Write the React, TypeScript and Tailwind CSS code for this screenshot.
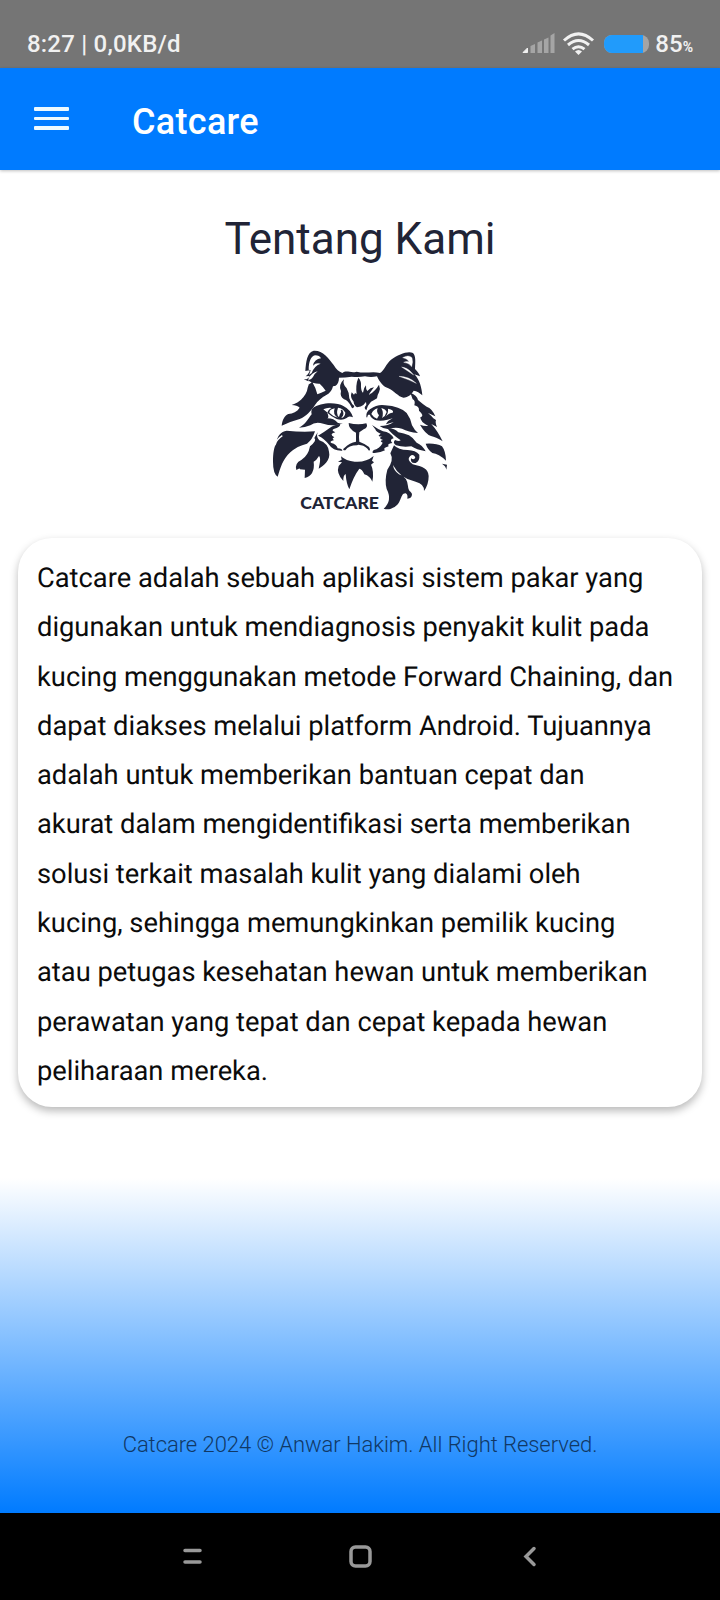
const lines = [
  'Catcare adalah sebuah aplikasi sistem pakar yang',
  'digunakan untuk mendiagnosis penyakit kulit pada',
  'kucing menggunakan metode Forward Chaining, dan',
  'dapat diakses melalui platform Android. Tujuannya',
  'adalah untuk memberikan bantuan cepat dan',
  'akurat dalam mengidentifikasi serta memberikan',
  'solusi terkait masalah kulit yang dialami oleh',
  'kucing, sehingga memungkinkan pemilik kucing',
  'atau petugas kesehatan hewan untuk memberikan',
  'perawatan yang tepat dan cepat kepada hewan',
  'peliharaan mereka.',
];

function StatusBar() {
  return (
    <div className="flex h-[68px] shrink-0 items-end justify-between bg-[#757575] pr-[27px] pb-[10px] pl-[27px] text-[#f1f1f1]">
      <span className="text-[24px] leading-[28px] font-medium tracking-[0.2px] whitespace-nowrap">8:27 | 0,0KB/d</span>
      <div className="flex h-[28px] items-center">
        <svg width="133" height="28" viewBox="0 0 133 28">
          <path d="M1 22.500 5.500 18v4.500z" fill="#f1f1f1" stroke="#f1f1f1" />
          <path d="M10 23v-7l4.500-2v9zM17 23V12.500l4.500-2V23zM23.500 23V9.500l4.500-2V23zM30 23V5.500L34 3v20z" fill="#a5a5a5" transform="translate(-1.500 0)" />
          <g fill="none" stroke="#f1f1f1" strokeWidth="3">
            <path d="M42 10.500Q56.500-2.800 71 10.500" />
            <path d="M46 15Q56.500 6 67 15" />
            <path d="M50.500 19.200Q56.500 14.300 62.500 19.200" />
          </g>
          <path d="M53 21.500q3.500-3 7 0L56.500 25z" fill="#f1f1f1" />
          <rect x="82" y="5" width="45" height="18" rx="8" fill="#a4a4a4" />
          <path d="M90 5h31v18H90a8 8 0 0 1-8-8v-2a8 8 0 0 1 8-8z" fill="#219bfb" />
        </svg>
        <span className="text-[24px] leading-[28px] font-medium">85</span>
        <span className="pt-[6px] text-[14px] leading-[20px] font-bold">%</span>
      </div>
    </div>
  );
}

function CatLogo() {
  return (
    <svg width="190" height="170" viewBox="0 0 570 510" className="shrink-0" fill="#212436">
      {/* ears and brow */}
      <path d="M121 78C123 50 126 22 146 17C172 15 192 40 206 60C214 74 222 80 232 84C245 74 258 86 275 80C300 86 325 78 345 84C358 76 362 58 378 44C400 28 430 16 444 24C453 32 451 52 450 72C458 80 464 88 465 94L448 88C464 104 470 128 472 151C464 144 456 138 446 137C440 148 430 157 415 158C400 156 386 136 370 130C356 126 344 112 336 94Q318 98 300 94Q280 98 260 95Q240 98 222 98C222 110 218 118 212 122L204 124Q200 142 184 150C170 158 158 168 150 180C138 198 124 214 104 222Q75 230 50 242C52 226 58 212 70 207C84 206 96 200 104 188Q96 180 80 180Q100 172 108 164Q126 146 128 128L134 110L116 103Q130 104 134 93L122 94Q134 84 134 76Z" />
      <path d="M131 74C131 50 138 33 150 31C160 31 165 35 168 40Q148 42 144 62Q153 52 167 56Q148 62 140 84L132 90L137 76ZM131 99Q140 84 158 79Q146 88 144 96Q140 103 130 106ZM143 113Q157 117 164 116Q173 124 182 137Q168 143 157 148Q153 129 143 113ZM129 106Q134 110 140 112L133 118Z" fill="#fff" />
      <path d="M413 38Q430 28 441 38Q445 50 440 65Q430 53 416 52Q422 48 432 50Q426 40 413 38ZM410 66Q426 67 439 82L446 90Q428 78 410 66ZM402 94Q432 94 454 115Q432 104 402 94Z" fill="#fff" stroke="#fff" />
      {/* forehead stripes */}
      <path d="M280 98Q290 108 288 126Q289 140 294 143Q296 128 303 121Q302 132 307 138Q316 128 327 127Q313 142 307 162Q300 184 276 187Q266 180 266 170Q254 158 260 142L267 149Q271 141 275 148Q271 120 280 98ZM237 103Q232 118 245 130Q254 146 253 160Q261 180 268 183Q263 196 258 184Q249 166 237 163Q224 155 228 138Q219 120 237 103ZM342 119Q347 130 342 142Q336 152 336 160Q328 166 318 170Q308 180 304 196Q294 189 304 180Q300 160 315 147Q330 139 342 119Z" />
      {/* eye patches */}
      <path d="M102 248C122 238 128 223 140 208Q137 196 143 190C165 172 215 171 235 183Q257 194 264 217Q251 211 245 219Q232 228 215 222Q196 212 187 203Q193 218 187 220Q207 220 218 233Q230 237 236 235Q205 246 175 236Q150 229 136 241Q120 248 102 248ZM304 215Q302 201 316 192Q338 177 360 181Q405 184 425 204Q437 220 441 241Q449 257 459 264Q430 261 411 251Q395 246 383 249Q362 257 344 243Q370 243 386 231L363 238Q366 228 383 220L367 224Q347 230 330 225Q316 217 315 210Q309 205 306 218Z" />
      <path d="M193 203Q193 193 209 190Q202 210 219 218Q203 214 193 203ZM219 188Q234 189 241 203Q240 216 229 219Q239 204 230 199Q225 205 222 216Q212 208 219 188ZM175 193Q187 187 200 189Q188 195 188 203ZM319 207Q325 193 338 190Q333 200 342 211L336 221Q325 217 319 207ZM349 189Q362 192 365 201Q362 213 351 219Q357 204 349 189ZM369 191Q389 195 383 203Q373 203 361 215Q371 204 369 191Z" fill="#fff" />
      <path d="M229 195q8 13-1 20M345 194v16" fill="none" stroke="#212436" strokeWidth="5" />
      {/* nose, mouth, whiskers */}
      <path d="M251 234Q278 241 304 235Q311 247 296 253L283 262Q281 274 283 290Q300 296 312 306Q318 316 312 317Q302 303 288 301Q280 297 276 301Q251 301 241 316Q229 315 239 308Q254 293 273 290V263Q250 252 251 234Z" />
      <path d="M225 237Q228 243 215 249Q192 254 211 262Q190 267 208 277Q198 282 208 285Q191 289 199 294Q215 298 218 310Q232 311 232 317Q204 318 193 300Q178 280 159 272Q180 260 193 250Q205 240 225 237ZM321 240Q339 253 354 259Q377 262 386 280Q372 284 382 294Q365 296 371 304Q352 309 360 316Q340 326 323 324Q321 315 334 313Q350 302 353 293Q341 287 354 285Q338 280 351 274Q333 276 347 266Q334 262 331 253Z" />
      {/* left mane */}
      <path d="M24 350C24 324 27 305 34 296C35 274 48 259 65 257Q111 262 150 259Q142 285 126 296Q96 303 76 322C52 344 46 370 38 395Q24 386 24 350Z" />
      <path d="M29 300Q34 284 52 272" fill="none" stroke="#fff" strokeWidth="4" />
      <path d="M158 262Q153 276 163 286Q189 295 192 320C198 344 176 363 161 371C166 349 167 339 162 333Q154 347 146 350Q151 390 119 399L120 374L105 373Q105 367 94 375Q88 355 109 345Q130 332 135 304Q157 286 148 279Z" />
      {/* chin */}
      <path d="M228 334Q243 348 269 350Q302 353 326 333L321 347L327 352L318 359Q328 379 322 410Q315 393 298 388Q291 372 283 371Q266 393 253 433Q244 416 242 387Q234 392 235 408Q213 385 221 363L231 352L219 350L230 344Z" />
      {/* right mane */}
      <path d="M436 143Q457 151 459 165Q475 179 485 185Q502 191 511 214L489 204Q500 213 505 220L513 225Q510 233 516 246L499 237Q518 258 533 289Q512 276 498 273Q481 267 465 239Q476 244 490 243Q465 230 466 217Q480 213 462 197Q463 184 448 181Q452 166 443 163Z" />
      <path d="M367 250Q388 249 400 262Q417 265 432 271Q444 278 455 293Q472 300 482 319Q454 314 439 304Q415 308 393 301Q382 294 390 285Q402 290 407 286Q379 267 367 250ZM482 296Q514 294 531 304Q542 318 543 347Q521 326 502 324Q488 314 482 296ZM531 356L546 359L544 374Q543 364 531 356Z" />
      <path d="M387 301Q400 315 428 315Q452 316 463 329Q465 348 452 354Q435 356 438 340Q448 347 451 337Q444 325 435 334Q424 344 443 358C474 366 489 370 491 393Q491 419 477 438Q479 417 452 410Q405 401 384 360Q386 377 402 388Q427 396 429 424C430 440 439 440 441 447Q441 461 427 461Q429 448 422 445C403 444 414 480 378 491Q367 495 356 491Q383 467 365 432Q358 407 367 374Q388 345 376 325Z" />
      <text x="106" y="492" textLength="236" lengthAdjust="spacingAndGlyphs" fontFamily="Lato, sans-serif" fontWeight="900" fontSize="51">CATCARE</text>
    </svg>
  );
}

export default function App() {
  return (
    <div className="flex h-[1600px] w-[720px] flex-col overflow-hidden bg-white font-[Roboto,sans-serif]">
      <StatusBar />
      <header className="z-10 flex h-[102px] shrink-0 items-center bg-[#007bff] pl-[34px] text-white shadow-[0_1px_3px_rgba(0,0,0,0.25)]">
        <div className="mt-[-1px] flex w-[35px] flex-col gap-[6px]">
          <i className="h-[3.700px] rounded-[1px] bg-[#eefaff]" />
          <i className="h-[3.700px] rounded-[1px] bg-[#eefaff]" />
          <i className="h-[3.700px] rounded-[1px] bg-[#eefaff]" />
        </div>
        <span className="pt-[5px] pl-[63px] text-[36px] leading-[44px] font-medium tracking-[0.3px]">Catcare</span>
      </header>
      <main className="flex flex-1 flex-col items-center">
        <h1 className="mt-[42px] text-[44px] leading-[54px] whitespace-nowrap text-[#212436]">Tentang Kami</h1>
        <div className="mt-[79px]">
          <CatLogo />
        </div>
        <section className="mt-[23px] h-[569px] w-[684px] rounded-[34px] bg-white pt-[16px] pl-[19px] text-[27.300px] leading-[49.300px] text-[#0b0b0b] shadow-[0_4px_9px_rgba(0,0,0,0.28)] [text-rendering:geometricPrecision]">
          {lines.map((line) => (
            <div key={line} className="whitespace-nowrap">
              <span>{line}</span>
            </div>
          ))}
        </section>
        <footer className="mt-[71px] flex w-full flex-1 items-end justify-center bg-linear-to-b/srgb from-white to-[#007bff] pb-[54px] text-[22px] leading-[28px] font-light tracking-[-0.050px] text-[#103865]">
          <span>Catcare 2024 © Anwar Hakim. All Right Reserved.</span>
        </footer>
      </main>
      <nav className="flex h-[87px] shrink-0 items-center bg-black pb-[2px] pl-[183px]">
        <svg width="354" height="24" viewBox="0 0 354 24" fill="none" stroke="#999" strokeWidth="3.500" strokeLinecap="round">
          <path d="M2 6.500h15M2 18h15" />
          <rect x="168" y="3" width="19" height="19" rx="4.500" />
          <path d="M351 4.500 343 12.500l8 8" />
        </svg>
      </nav>
    </div>
  );
}
